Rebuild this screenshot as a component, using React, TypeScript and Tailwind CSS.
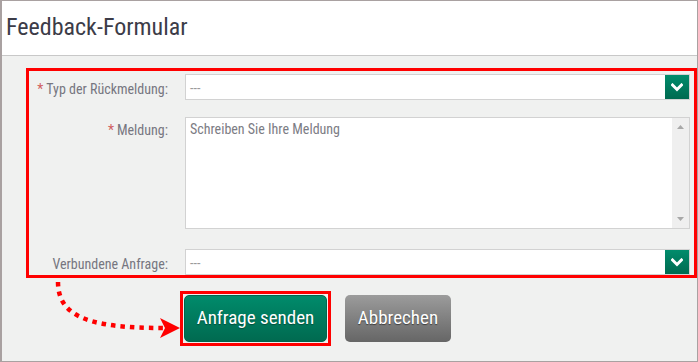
function Chevron() {
  return (
    <svg width="12" height="9" viewBox="0 0 12 9" className="block">
      <path d="M1.5 2 L6 6.5 L10.5 2" fill="none" stroke="white" strokeWidth="3" strokeLinecap="square" />
    </svg>
  );
}

function Select({ value }: { value: string }) {
  return (
    <div className="flex h-[26px] flex-1 items-stretch border border-[#d2d2d2] bg-white">
      <div className="flex flex-1 items-center pl-[4px] pt-[2px] text-[14px] text-[#9a9a9a]">{value}</div>
      <div className="flex w-[24px] items-center justify-center bg-gradient-to-b from-[#008c6c] to-[#006a50]">
        <Chevron />
      </div>
    </div>
  );
}

function Label({ children, required }: { children: string; required?: boolean }) {
  return (
    <div className="w-[156px] shrink-0 pr-[17px] text-right text-[14px] leading-[18px] text-[#767680]">
      {required && <span className="mr-[3px] text-[#d06060]">*</span>}
      {children}
    </div>
  );
}

export default function App() {
  return (
    <div
      className="relative flex h-[362px] w-[698px] flex-col border border-l-2 border-[#a9a1a1] bg-[#f0f1f0]"
      style={{ fontFamily: '"Roboto Condensed", "Liberation Sans", sans-serif' }}
    >
      <div className="flex h-[55px] shrink-0 items-center border-b border-[#c8c8c8] bg-white pl-[4px] pb-[2px] text-[24px] text-[#3c3c48]">
        Feedback-Formular
      </div>
      <div className="flex flex-1 flex-col pl-[24px] pt-[12px]">
        <div className="flex flex-col border-[3px] border-[#ff0000] pt-[3px] pr-[4px]">
          <div className="flex items-start">
            <div className="pt-[6px]">
              <Label required>Typ der Rückmeldung:</Label>
            </div>
            <Select value="---" />
          </div>
          <div className="mt-[17px] flex items-start">
            <div className="pt-[4px]">
              <Label required>Meldung:</Label>
            </div>
            <div className="flex h-[112px] flex-1 border border-[#d2d2d2] bg-white">
              <div className="flex-1 pl-[4px] pt-[2px] text-[14px] leading-[18px] text-[#7c7c84]">
                Schreiben Sie Ihre Meldung
              </div>
              <div className="flex w-[17px] flex-col items-center justify-between bg-[#efefef] py-[7px]">
                <svg width="7" height="4" viewBox="0 0 7 4"><path d="M3.5 0 L7 4 L0 4 Z" fill="#a8a8a8" /></svg>
                <svg width="7" height="4" viewBox="0 0 7 4"><path d="M0 0 L7 0 L3.5 4 Z" fill="#a8a8a8" /></svg>
              </div>
            </div>
          </div>
          <div className="mt-[20px] flex items-start">
            <div className="pt-[6px]">
              <Label>Verbundene Anfrage:</Label>
            </div>
            <Select value="---" />
          </div>
        </div>
        <div className="mt-[13px] flex items-center pl-[154px]">
          <div className="border-[3px] border-[#ff0000] p-[1px]">
            <div className="flex h-[47px] w-[143px] items-center justify-center rounded-[5px] border border-[#00664c] bg-gradient-to-b from-[#008b6b] to-[#006a50] text-[19px] text-white [text-shadow:0_1px_1px_rgba(0,0,0,0.35)]">
              Anfrage senden
            </div>
          </div>
          <div className="ml-[14px] flex h-[47px] w-[106px] items-center justify-center rounded-[5px] bg-gradient-to-b from-[#9c9c9c] to-[#666666] text-[19px] text-white [text-shadow:0_1px_1px_rgba(0,0,0,0.5)]">
            Abbrechen
          </div>
        </div>
      </div>
      <svg className="pointer-events-none absolute left-[-2px] top-[-1px]" width="698" height="362" viewBox="0 0 698 362">
        <path d="M58 282 C58 318 92 328 164 328" fill="none" stroke="#ff0000" strokeWidth="4.5" strokeDasharray="4.5 5" />
        <path d="M160 318 L180 328 L160 338 L165 328 Z" fill="#ff0000" />
      </svg>
    </div>
  );
}
